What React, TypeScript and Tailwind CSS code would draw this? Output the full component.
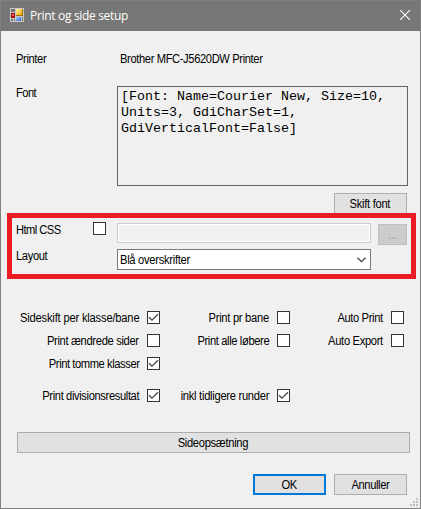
import type { ReactNode } from "react";

function Text({
  children,
  track = "tracking-[-0.4px]",
  origin = "origin-left",
}: {
  children: ReactNode;
  track?: string;
  origin?: string;
}) {
  return (
    <span className={`block scale-x-[0.93] whitespace-nowrap text-[12px] leading-[14px] ${track} ${origin}`}>
      {children}
    </span>
  );
}

function CheckBox({ checked = false }: { checked?: boolean }) {
  return (
    <span className="block h-[13px] w-[13px] shrink-0 border border-[#333333] bg-white">
      {checked && (
        <svg width="11" height="11" viewBox="0 0 11 11" fill="none" stroke="#444444" strokeWidth="1.3">
          <path d="M1 5.2 4 8.2 10 2.2" />
        </svg>
      )}
    </span>
  );
}

function Option({
  label,
  checked,
  track,
  className = "",
}: {
  label: string;
  checked?: boolean;
  track?: string;
  className?: string;
}) {
  return (
    <div className={`flex h-[13px] items-center justify-end gap-[8px] ${className}`}>
      <Text track={track} origin="origin-right">{label}</Text>
      <CheckBox checked={checked} />
    </div>
  );
}

function Button({ children, className = "" }: { children: ReactNode; className?: string }) {
  return (
    <button className={`flex h-[21px] shrink-0 items-center justify-center bg-[#e1e1e1] pr-px ${className}`}>
      {children}
    </button>
  );
}

function AppIcon() {
  return (
    <svg width="14" height="14" viewBox="0 0 14 14" shapeRendering="crispEdges" className="mt-[8px]">
      <defs>
        <linearGradient id="gold" x1="0" y1="0" x2="1" y2="1">
          <stop offset="0" stopColor="#fff3a8" />
          <stop offset="1" stopColor="#f0a800" />
        </linearGradient>
        <linearGradient id="blue" x1="0" y1="0" x2="1" y2="1">
          <stop offset="0" stopColor="#a9ccff" />
          <stop offset="1" stopColor="#2c66d8" />
        </linearGradient>
      </defs>
      <rect width="14" height="14" fill="#c6c6c6" />
      <path d="M1 1h4v3H1zM1 11h2v2H1zM4 11h1v2H4zM12 9h1v4h-1z" fill="#777777" />
      <rect x="6" y="1" width="7" height="7" fill="#9a7000" />
      <rect x="6" y="1" width="6" height="6" fill="url(#gold)" />
      <rect x="1" y="5" width="4" height="5" fill="#a00c0c" />
      <rect x="2" y="6" width="2" height="2" fill="#e86a58" />
      <rect x="6" y="9" width="5" height="4" fill="url(#blue)" />
    </svg>
  );
}

export default function App() {
  return (
    <div className="relative flex h-[509px] w-[421px] flex-col overflow-hidden border border-[#808080] bg-[#f0f0f0] font-['Liberation_Sans',Arial,sans-serif] text-black">
      <header className="-mx-px -mt-px flex h-[31px] shrink-0 border border-b-0 border-[#808080] bg-[#777777] pl-[9px] pr-[10px]">
        <div className="-mt-px flex flex-1">
          <AppIcon />
          <h1 className="ml-[6px] mt-[8px] font-['Open_Sans','Noto_Sans',sans-serif] text-[12px] leading-[16px] tracking-[-0.32px] text-white">
            Print og side setup
          </h1>
          <svg width="10" height="10" viewBox="0 0 10 10" stroke="#ffffff" strokeWidth="1.1" className="ml-auto mt-[10px]">
            <path d="M0 0 10 10M10 0 0 10" />
          </svg>
        </div>
      </header>

      <div className="mt-[21px] flex h-[34px] shrink-0 pl-[15px]">
        <div className="w-[104px]"><Text>Printer</Text></div>
        <Text>Brother MFC-J5620DW Printer</Text>
      </div>

      <div className="flex h-[100px] shrink-0 pl-[15px]">
        <div className="w-[101px]"><Text track="tracking-[-0.6px]">Font</Text></div>
        <div className="h-[100px] w-[291px] whitespace-pre border border-[#646464] pl-[3px] pt-[2px] font-['Liberation_Mono','Courier_New',monospace] text-[13.33px] leading-[16px]">
          {"[Font: Name=Courier New, Size=10,\nUnits=3, GdiCharSet=1,\nGdiVerticalFont=False]"}
        </div>
      </div>

      <div className="mt-[7px] flex h-[20px] shrink-0 justify-end pr-[13px]">
        <Button className="w-[73px] border border-[#adadad]">
          <Text track="tracking-[-0.3px]" origin="origin-center">Skift font</Text>
        </Button>
      </div>

      <section className="relative ml-[6px] flex h-[66px] w-[409px] shrink-0 flex-col border-[5px] border-[#ed1c24] bg-[#f0f0f0] pl-[4px]">
        <div className="mt-[4px] flex h-[27px] items-start">
          <div className="mt-[1px] w-[77px]"><Text track="tracking-[-0.6px]">Html CSS</Text></div>
          <CheckBox />
          <div className="ml-[11px] mt-[1px] h-[20px] w-[254px] border border-[#cccccc] bg-[#f0f0f0] shadow-[inset_0_0_0_1px_#ffffff]" />
          <Button className="ml-[7px] mt-[2px] w-[29px] border border-[#bfbfbf] !bg-[#cccccc] text-[#969696]">
            <Text origin="origin-center">...</Text>
          </Button>
        </div>
        <div className="flex items-start">
          <div className="w-[101px]"><Text>Layout</Text></div>
          <div className="flex h-[21px] w-[254px] items-center justify-between border border-[#7a7a7a] bg-white pl-[2px] pr-[4px]">
            <Text track="tracking-[-0.3px]">Blå overskrifter</Text>
            <svg width="9" height="6" viewBox="0 0 9 6" fill="none" stroke="#444444" strokeWidth="1.3">
              <path d="M.5 .8 4.5 4.7 8.5 .8" />
            </svg>
          </div>
        </div>
      </section>

      <div className="mt-[32px] grid shrink-0 grid-cols-[159px_130px_114px] gap-y-[10px]">
        <Option label="Sideskift per klasse/bane" checked track="tracking-[-0.2px]" />
        <Option label="Print pr bane" track="tracking-[-0.3px]" />
        <Option label="Auto Print" />
        <Option label="Print ændrede sider" track="tracking-[-0.35px]" />
        <Option label="Print alle løbere" />
        <Option label="Auto Export" track="tracking-[-0.35px]" />
        <Option label="Print tomme klasser" checked track="tracking-[-0.45px]" />
        <Option label="Print divisionsresultat" checked className="col-start-1 mt-[9px]" />
        <Option label="inkl tidligere runder" checked track="tracking-[-0.3px]" className="mt-[9px]" />
      </div>

      <div className="mt-[30px] flex shrink-0 pl-[16px]">
        <Button className="w-[393px] border border-[#adadad]">
          <Text track="tracking-[-0.33px]" origin="origin-center">Sideopsætning</Text>
        </Button>
      </div>

      <footer className="mt-[21px] flex shrink-0 justify-end gap-[8px] pr-[13px]">
        <Button className="w-[73px] border-2 border-[#0078d7]">
          <Text track="tracking-[-0.6px]" origin="origin-center">OK</Text>
        </Button>
        <Button className="w-[73px] border border-[#adadad]">
          <Text origin="origin-center">Annuller</Text>
        </Button>
      </footer>

      <svg width="8" height="8" viewBox="0 0 8 8" fill="#bfbfbf" shapeRendering="crispEdges" className="absolute bottom-[2px] right-[2px]">
        <path d="M6 0h2v2H6zM3 3h2v2H3zM6 3h2v2H6zM0 6h2v2H0zM3 6h2v2H3zM6 6h2v2H6z" />
      </svg>
    </div>
  );
}
